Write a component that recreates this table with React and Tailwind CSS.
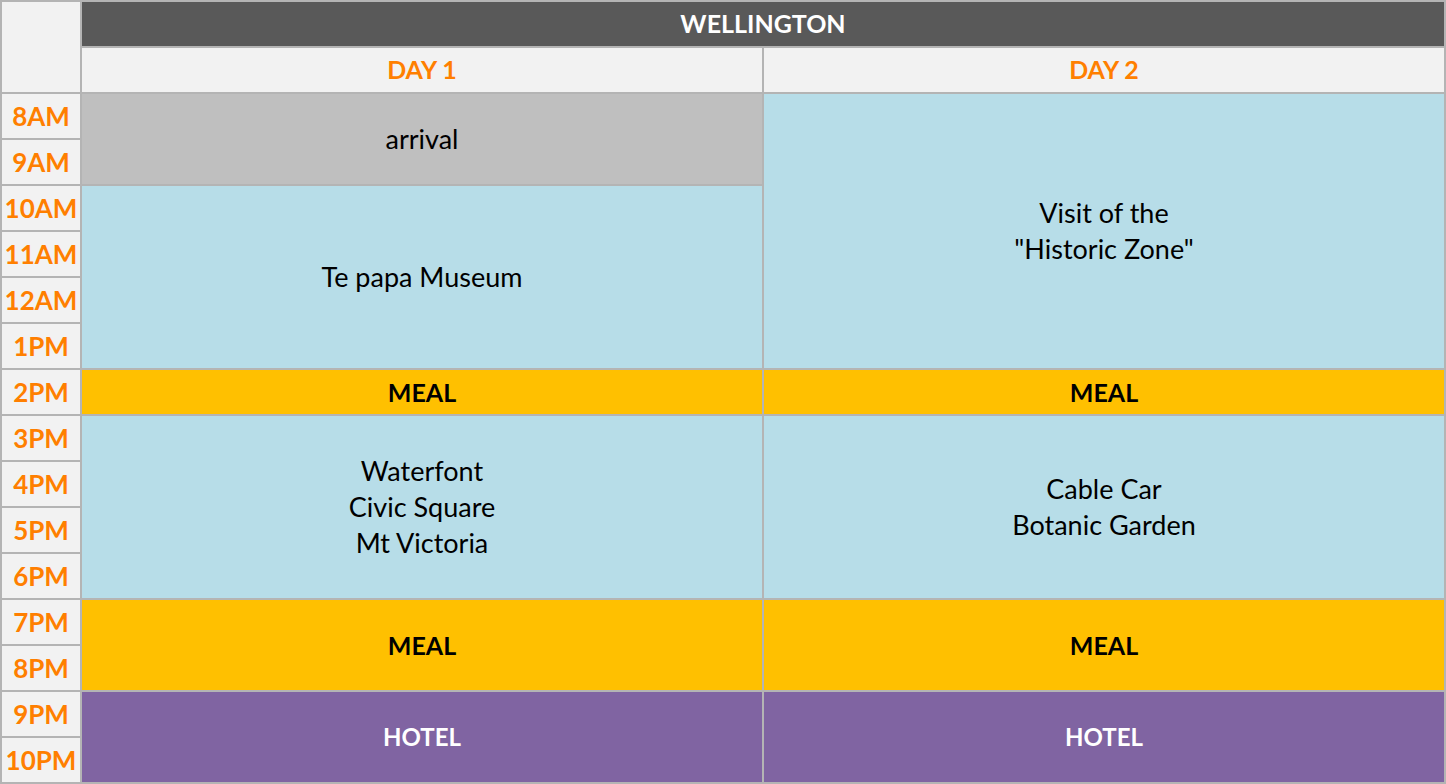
import React from 'react';

const font = { fontFamily: 'Lato, "Open Sans", sans-serif' };

const Time = ({ label }) => (
  <div className="bg-[#f2f2f2] flex items-center justify-center font-bold text-[26px] text-[#ff7f00]">
    {label}
  </div>
);

const Block = ({ className, children }) => (
  <div className={`flex flex-col items-center justify-center text-center leading-[36px] ${className}`}>
    {children}
  </div>
);

const App = () => {
  return (
    <div
      className="w-[1446px] h-[784px] bg-[#b4b4b4] p-[2px] grid grid-cols-[78px_680px_680px] grid-rows-[repeat(17,44px)] gap-[2px] text-[27px] text-black"
      style={font}
    >
      {/* header */}
      <div className="row-span-2 bg-[#f2f2f2]"></div>
      <div className="col-span-2 bg-[#595959] flex items-center justify-center text-white font-bold text-[25px]">
        WELLINGTON
      </div>
      <div className="bg-[#f2f2f2] flex items-center justify-center text-[#ff7f00] font-bold text-[25px]">DAY 1</div>
      <div className="bg-[#f2f2f2] flex items-center justify-center text-[#ff7f00] font-bold text-[25px]">DAY 2</div>

      {/* 8AM - 1PM */}
      <Time label="8AM" />
      <Block className="row-span-2 bg-[#bfbfbf]">arrival</Block>
      <Block className="row-span-6 bg-[#b7dde8]">
        <span>Visit of the</span>
        <span>"Historic Zone"</span>
      </Block>
      <Time label="9AM" />
      <Time label="10AM" />
      <Block className="row-span-4 bg-[#b7dde8]">Te papa Museum</Block>
      <Time label="11AM" />
      <Time label="12AM" />
      <Time label="1PM" />

      {/* 2PM */}
      <Time label="2PM" />
      <Block className="bg-[#ffc000] font-bold text-[25px]">MEAL</Block>
      <Block className="bg-[#ffc000] font-bold text-[25px]">MEAL</Block>

      {/* 3PM - 6PM */}
      <Time label="3PM" />
      <Block className="row-span-4 bg-[#b7dde8]">
        <span>Waterfont</span>
        <span>Civic Square</span>
        <span>Mt Victoria</span>
      </Block>
      <Block className="row-span-4 bg-[#b7dde8]">
        <span>Cable Car</span>
        <span>Botanic Garden</span>
      </Block>
      <Time label="4PM" />
      <Time label="5PM" />
      <Time label="6PM" />

      {/* evening */}
      <Time label="7PM" />
      <Block className="row-span-2 bg-[#ffc000] font-bold text-[25px]">MEAL</Block>
      <Block className="row-span-2 bg-[#ffc000] font-bold text-[25px]">MEAL</Block>
      <Time label="8PM" />
      <Time label="9PM" />
      <Block className="row-span-2 bg-[#8064a2] font-bold text-white text-[24px]">HOTEL</Block>
      <Block className="row-span-2 bg-[#8064a2] font-bold text-white text-[24px]">HOTEL</Block>
      <Time label="10PM" />
    </div>
  );
};

export default App;
